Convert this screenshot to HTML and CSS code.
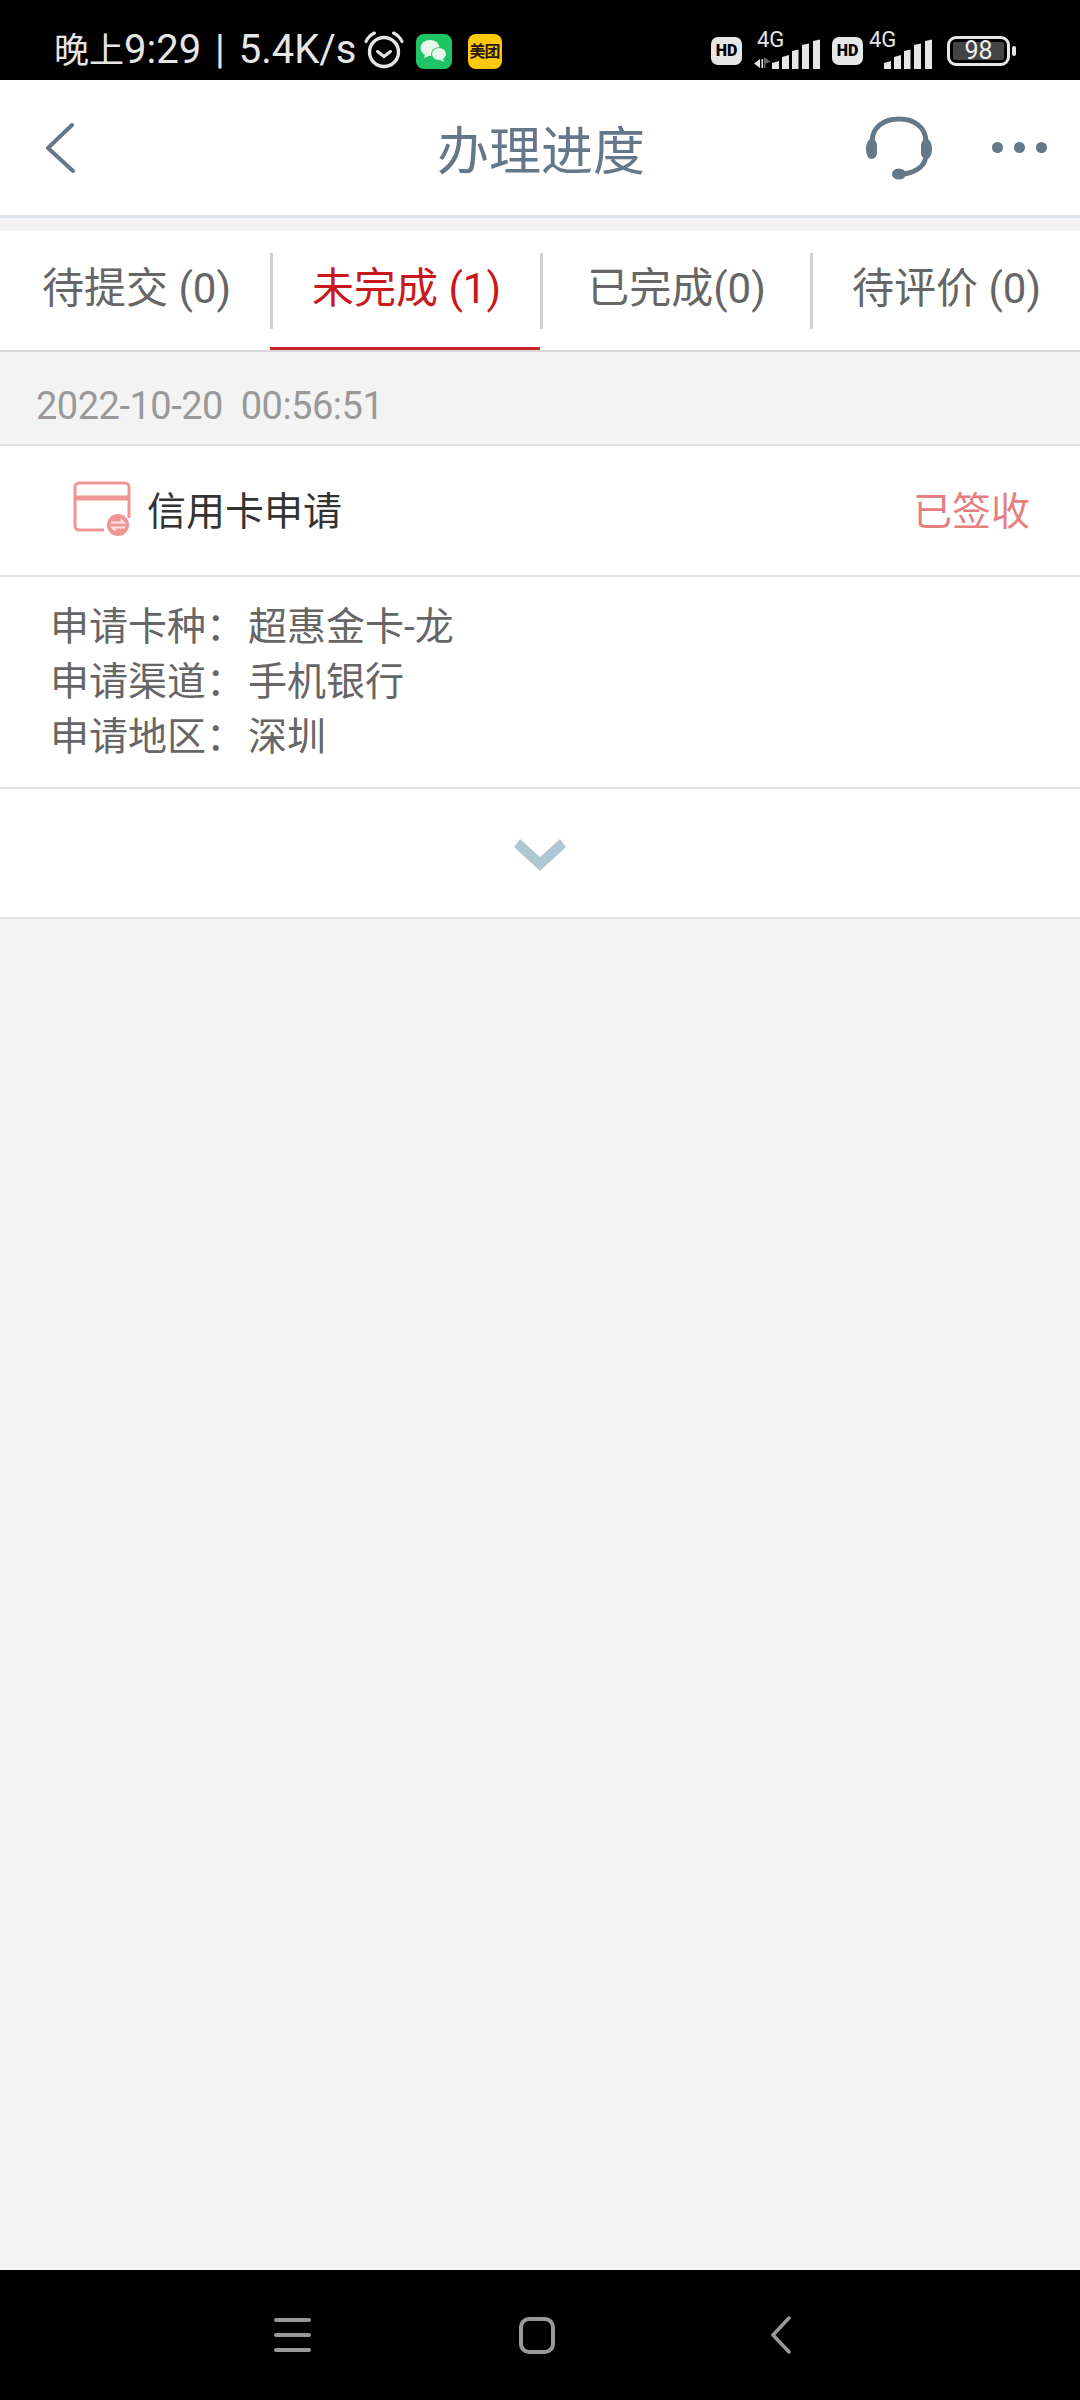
FILE: index.html
```html
<!DOCTYPE html>
<html lang="zh-CN">
<head>
<meta charset="utf-8">
<title>办理进度</title>
<link rel="stylesheet" href="styles.css">
</head>
<body>

    <div class="status-bar">
        <span class="status-time"><span class="status-cjk">晚上</span>9:29 | 5.4K/s</span>
        <svg class="alarm" width="40" height="38" viewBox="0 0 40 38" fill="none" stroke="#e6e6e6" stroke-linecap="round">
            <circle cx="20" cy="21" r="14.5" stroke-width="3.4"/>
            <path d="M13.5 20.5l6.5 5 6.5-5" stroke-width="3"/>
            <path d="M2 10.5C4 6.500 7 3.500 10.500 2M38 10.500C36 6.500 33 3.500 29.500 2" stroke-width="3"/>
        </svg>
        <svg class="app-icon wechat" width="36" height="35" viewBox="0 0 36 35">
            <rect width="36" height="35" rx="8" fill="#1fc565"/>
            <ellipse cx="14" cy="14" rx="9.500" ry="8" fill="#e8f8ee"/>
            <path d="M9 20l-1 4 5-2z" fill="#e8f8ee"/>
            <ellipse cx="23" cy="20" rx="8" ry="6.800" fill="#1fc565"/>
            <ellipse cx="23" cy="20" rx="7" ry="6" fill="#e8f8ee"/>
            <path d="M27 25l1 3-4-2z" fill="#e8f8ee"/>
        </svg>
        <span class="app-icon meituan">美团</span>

        <div class="status-right">
            <span class="hd">HD</span>
            <div class="sim sim-first">
                <span class="sim-label">4G</span>
                <svg width="66" height="30" viewBox="0 0 66 30" fill="#e6e6e6">
                    <path d="M6 20v9l-6-4.500zM7.500 20h1.500v9h-1.500z"/>
                    <path d="M10 19h1.500l5 4-5 1.500v4.500h-1.500z" fill="#666"/>
                    <path d="M18 30v-6l7-2v8zM28 30V18l7-2v14zM38 30V12l6.500-1.500V30zM48 30V6l7-1.500V30zM59 30V2l7-1.500V30z"/>
                </svg>
            </div>
            <span class="hd">HD</span>
            <div class="sim">
                <span class="sim-label">4G</span>
                <svg width="48" height="30" viewBox="0 0 48 30" fill="#e6e6e6">
                    <path d="M0 30v-6l7-2v8zM10 30V18l7-2v14zM20 30V12l6.500-1.500V30zM30 30V6l7-1.500V30zM41 30V2l7-1.500V30z"/>
                </svg>
            </div>
            <div class="battery"><span class="battery-level">98</span></div>
            <span class="battery-nub"></span>
        </div>
    </div>

    <div class="app-header">
        <svg class="back" width="30" height="52" viewBox="0 0 30 52" fill="none" stroke="#64788a" stroke-width="4" stroke-linecap="round" stroke-linejoin="round">
            <path d="M27 3L3 26l25 23"/>
        </svg>
        <h1 class="title">办理进度</h1>
        <svg class="headset" width="66" height="65" viewBox="0 0 66 65" fill="none" stroke="#64788a">
            <path d="M6 26C6 11 18 3 33 3s27 8 27 23v14c-1 10-10 16-22 18" stroke-width="5"/>
            <path d="M5.500 23C9 23 11 26 11 30v6c0 4-2 7-5.500 7S0 38 0 33s2-10 5.500-10z" fill="#64788a" stroke="none"/>
            <path d="M60.500 23C57 23 55 26 55 30v6c0 4 2 7 5.500 7S66 38 66 33s-2-10-5.500-10z" fill="#64788a" stroke="none"/>
            <ellipse cx="33" cy="58" rx="7" ry="5.500" fill="#64788a" stroke="none"/>
        </svg>
        <div class="dots"><span></span><span></span><span></span></div>
    </div>

    <div class="content">
        <div class="tabs">
            <div class="tab"><span class="tab-label tab-first">待提交 (0)</span></div>
            <div class="tab active"><span class="tab-label">未完成 (1)</span></div>
            <div class="tab"><span class="tab-label">已完成(0)</span></div>
            <div class="tab"><span class="tab-label">待评价 (0)</span></div>
        </div>

        <div class="date">2022-10-20&nbsp;&nbsp;00:56:51</div>

        <div class="card">
            <div class="card-head">
                <svg class="card-icon" width="58" height="56" viewBox="0 0 58 56" fill="none" stroke="#f19596" stroke-width="3">
                    <path d="M31 49H6a4 4 0 0 1-4-4V6a4 4 0 0 1 4-4h46a4 4 0 0 1 4 4v31"/>
                    <path d="M2 17h54" stroke-width="5"/>
                    <circle cx="45" cy="44" r="11" fill="#f19596" stroke="none"/>
                    <path d="M38 41.500h13l-3.500-3M52 46.500H39l3.500 3" stroke="#fde4e4" stroke-width="1.800"/>
                </svg>
                <span class="card-name">信用卡申请</span>
                <span class="card-state">已签收</span>
            </div>
            <div class="card-body">
                <div><span class="card-key">申请卡种：</span>超惠金卡-龙</div>
                <div><span class="card-key">申请渠道：</span>手机银行</div>
                <div><span class="card-key">申请地区：</span>深圳</div>
            </div>
            <div class="card-more">
                <svg width="52" height="32" viewBox="0 0 52 32" fill="#b0c8d4">
                    <path d="M6 0L26 18 46 0l6 8-26 24L0 8z"/>
                </svg>
            </div>
        </div>
    </div>

    <div class="nav-bar">
        <div class="nav-menu"><span></span><span></span><span></span></div>
        <div class="nav-home"></div>
        <svg class="nav-back" width="22" height="38" viewBox="0 0 22 38" fill="none" stroke="#999" stroke-width="3.500" stroke-linecap="round" stroke-linejoin="round">
            <path d="M19 2L3 19l16 17"/>
        </svg>
    </div>

</body>
</html>
```

FILE: styles.css
```css
* {
    box-sizing: border-box;
}

body {
    margin: 0;
    height: 2400px;
    display: flex;
    flex-direction: column;
    background-color: #f3f3f3;
    font-family: "Roboto", "Noto Sans CJK SC", sans-serif;
}

.status-bar {
    height: 80px;
    flex: none;
    display: flex;
    align-items: center;
    padding: 22px 64px 0 54px;
    background-color: black;
    color: #e6e6e6;
}

.status-time {
    font-size: 40px;
    line-height: 48px;
    word-spacing: 4px;
    white-space: nowrap;
}

.status-cjk {
    font-size: 35px;
}

.alarm {
    margin-left: 7px;
    margin-top: -2px;
}

.app-icon {
    flex: none;
}

.wechat {
    margin-left: 12px;
}

.meituan {
    width: 34px;
    height: 35px;
    margin-left: 16px;
    border-radius: 8px;
    background-color: #fdc80e;
    color: #2a1a05;
    font-size: 16px;
    font-weight: 700;
    letter-spacing: -1px;
    line-height: 35px;
    text-align: center;
    white-space: nowrap;
    overflow: hidden;
}

.status-right {
    margin-left: auto;
    display: flex;
    align-items: center;
}

.hd {
    width: 31px;
    height: 28px;
    border-radius: 7px;
    background-color: #e6e6e6;
    color: black;
    font-size: 16px;
    font-weight: 900;
    line-height: 28px;
    text-align: center;
}

.sim {
    width: 69px;
    height: 36px;
    display: flex;
    align-items: flex-end;
    justify-content: flex-end;
    position: relative;
}

.sim-first {
    width: 78px;
    margin-right: 12px;
}

.sim-label {
    position: absolute;
    left: 6px;
    top: -6px;
    font-size: 22px;
}

.sim-first .sim-label {
    left: 15px;
}

.battery {
    width: 63px;
    height: 30px;
    margin-left: 15px;
    padding: 3px;
    border: 3px solid #e6e6e6;
    border-radius: 9px;
}

.battery-level {
    display: block;
    width: 51px;
    height: 18px;
    background-color: #444;
    border-radius: 2px;
    color: #eee;
    font-size: 25px;
    line-height: 18px;
    text-align: center;
}

.battery-nub {
    width: 4px;
    height: 10px;
    margin-left: 2px;
    border-radius: 2px;
    background-color: #e6e6e6;
}

.app-header {
    height: 138px;
    flex: none;
    display: flex;
    align-items: center;
    padding: 0 31px 0 45px;
    background-color: white;
    border-bottom: 3px solid #dde3e8;
}

.back {
    margin-right: 362px;
}

.title {
    margin: 0;
    width: 204px;
    color: #64788a;
    font-size: 52px;
    font-weight: 400;
    white-space: nowrap;
}

.headset {
    margin-left: 225px;
    margin-top: 2px;
}

.dots {
    display: flex;
    gap: 11px;
    margin-left: 60px;
}

.dots span {
    width: 11px;
    height: 11px;
    border-radius: 50%;
    background-color: #64788a;
}

.content {
    flex: 1;
    padding-top: 13px;
}

.tabs {
    display: grid;
    grid-template-columns: repeat(4, 1fr);
    background-color: white;
    border-bottom: 2px solid #d8d8d8;
}

.tab {
    padding: 22px 0 18px;
    border-bottom: 3px solid transparent;
    color: #666;
    font-size: 42px;
}

.tab.active {
    border-bottom-color: #c4282c;
    color: #c8191c;
}

.tab-label {
    height: 76px;
    display: flex;
    align-items: center;
    justify-content: center;
    padding-bottom: 14px;
    border-left: 3px solid #d0d0d0;
    white-space: pre;
}

.tab-label.tab-first {
    border-left-color: transparent;
}

.date {
    height: 92px;
    padding: 16px 0 0 36px;
    display: flex;
    align-items: center;
    color: #999;
    font-size: 38px;
    letter-spacing: -0.5px;
}

.card {
    background-color: white;
    border-top: 2px solid #e2e2e2;
    border-bottom: 2px solid #e2e2e2;
}

.card-head {
    height: 131px;
    display: flex;
    align-items: center;
    padding: 0 50px 4px 73px;
    border-bottom: 2px solid #e2e2e2;
}

.card-name {
    margin-left: 16px;
    margin-bottom: 2px;
    color: #333;
    font-size: 39px;
}

.card-state {
    margin-left: auto;
    margin-bottom: 2px;
    color: #e57f82;
    font-size: 39px;
}

.card-body {
    height: 212px;
    padding: 23px 0 0 50px;
    border-bottom: 2px solid #e2e2e2;
    color: #666;
    font-size: 39px;
    line-height: 55px;
}

.card-key {
    margin-right: 3px;
}

.card-more {
    height: 128px;
    display: flex;
    justify-content: center;
    padding-top: 50px;
}

.nav-bar {
    height: 130px;
    flex: none;
    display: flex;
    align-items: center;
    padding-left: 274px;
    background-color: black;
}

.nav-menu {
    width: 37px;
    display: flex;
    flex-direction: column;
    gap: 11px;
}

.nav-menu span {
    height: 4px;
    border-radius: 2px;
    background-color: #999;
}

.nav-home {
    width: 36px;
    height: 37px;
    margin-left: 208px;
    border: 4px solid #999;
    border-radius: 10px;
}

.nav-back {
    margin-left: 215px;
}
```
